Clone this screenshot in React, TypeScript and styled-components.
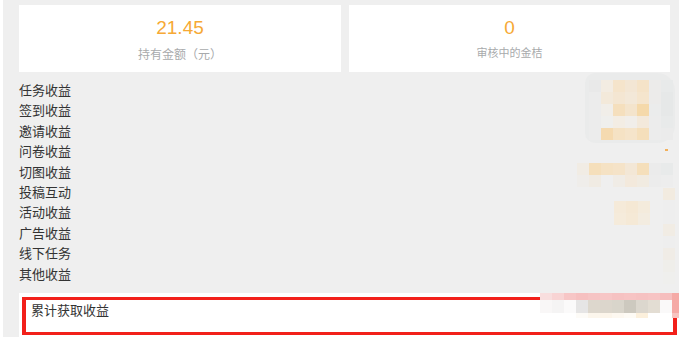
import React from 'react';
import styled, { createGlobalStyle } from 'styled-components';

const GlobalStyle = createGlobalStyle`
    html, body {
        margin: 0;
        padding: 0;
        background: #fff;
    }
    body {
        font-family: "Liberation Sans", "Noto Sans CJK SC", sans-serif;
        color: #333;
    }
`;

interface MosaicProps {
    x: number;
    y: number;
    cols: number;
    cell?: number;
    rows?: string;
}

interface LabelProps {
    size?: number;
    gap?: number;
}

const Page = styled.div`
    position: relative;
    margin-left: 3px;
    width: 676px;
    height: 337px;
    overflow: hidden;
    background: #efefef;
`;

const Summary = styled.div`
    display: grid;
    grid-template-columns: 322px 321px;
    gap: 8px;
    padding: 5px 0 0 16px;
`;

const Card = styled.div`
    display: flex;
    flex-direction: column;
    align-items: center;
    height: 67px;
    padding-top: 12px;
    box-sizing: border-box;
    background: #fff;
`;

const Amount = styled.div`
    font-size: 19px;
    line-height: 22px;
    color: #f6a935;
`;

const CardLabel = styled.div<LabelProps>`
    margin-top: ${({ gap }) => gap ?? 8}px;
    font-size: ${({ size }) => size ?? 12}px;
    line-height: 16px;
    color: #a8aaac;
`;

const IncomeList = styled.ul`
    list-style: none;
    margin: 9px 0 0;
    padding: 0 0 0 16px;
`;

const IncomeItem = styled.li`
    font-size: 13px;
    line-height: 20.4px;
    height: 20.4px;
    color: #333;
`;

const TotalRow = styled.div`
    margin: 8px 0 0 16px;
    padding: 4px 2px 0 3px;
    height: 60px;
    box-sizing: border-box;
    background: #fff;
`;

const Highlight = styled.div`
    height: 38px;
    box-sizing: border-box;
    border: 3px solid #f2201a;
    border-left-width: 4px;
    border-right-width: 4px;
    padding: 1px 0 0 5px;
    font-size: 13px;
    line-height: 20px;
    color: #333;
`;

const Mosaic = styled.div<MosaicProps>`
    position: absolute;
    left: ${({ x }) => x - 3}px;
    top: ${({ y }) => y}px;
    display: grid;
    grid-template-columns: repeat(${({ cols }) => cols}, ${({ cell }) => cell ?? 12}px);
    grid-template-rows: ${({ rows }) => rows ?? 'repeat(auto-fill, 12px)'};
    grid-auto-rows: ${({ cell }) => cell ?? 12}px;
`;

const Cell = styled.span`
    display: block;
`;

const Backdrop = styled.div`
    position: absolute;
    left: 582px;
    top: 73px;
    width: 90px;
    height: 70px;
    border-radius: 10px 18px 18px 10px;
    background: #eaebeb;
`;

const Dot = styled.span`
    position: absolute;
    left: 662px;
    top: 149px;
    width: 3px;
    height: 2px;
    background: #f3b05a;
`;

const items = ['任务收益', '签到收益', '邀请收益', '问卷收益', '切图收益', '投稿互动', '活动收益', '广告收益', '线下任务', '其他收益'];

const mosaics: { x: number; y: number; cols: number; cell?: number; rows?: string; colors: string[] }[] = [
    {
        x: 589,
        y: 80,
        cols: 7,
        colors: [
            'e9e9e9', 'f3ece2', 'f5e4cb', 'f3e6d4', 'f5e3c8', 'ecebea', 'e8eaea',
            'ececec', 'f3e9da', 'f4e6d2', 'f3e8d8', 'f5e5cd', 'ecebea', 'e6e8e8',
            'ececec', 'f1eee9', 'f5dfbd', 'f4e4cc', 'f5d9aa', 'ebecec', 'e6e8e8',
            'ececec', 'efefed', 'f3ede4', 'f1eeea', 'f3e9db', 'ececec', 'e8eaea',
            'ececec', 'f5dab0', 'f5e2c4', 'f5e4ca', 'f5dfbb', 'ececec', 'ebebeb',
        ],
    },
    {
        x: 577,
        y: 163,
        cols: 8,
        colors: [
            'f1ece4', 'f5dfbb', 'f5e2c4', 'f5e3c8', 'f3e7d6', 'f5dfbb', 'ebebeb', 'e8eaea',
            'efedea', 'f0ebe3', 'efefef', 'f0ece6', 'f3e9dc', 'f1ebe1', 'ececec', 'ededed',
        ],
    },
    {
        x: 614,
        y: 201,
        cols: 3,
        colors: ['f5ead9', 'f5e8d4', 'f4ebdc', 'f5ebdb', 'f5e9d6', 'f3ece0'],
    },
    {
        x: 663,
        y: 188,
        cols: 1,
        colors: ['f2ebe0', 'eeeeee', 'eeeeee', 'f1ece4', 'eeeeee', 'f0ece6', 'efeeea', 'efefed', 'efefef'],
    },
    {
        x: 540,
        y: 293,
        cols: 12,
        rows: '7px 13px 5px',
        colors: [
            'f8dede', 'f8d4d4', 'f7c6c6', 'f6c0c0', 'f6c4c4', 'f7c6c6', 'f6c2c2', 'f7c4c4', 'f6c2c2', 'f7c4c4', 'f6bebe', 'f5aaa6',
            'f9f7f7', 'f5f4f4', 'fbfafa', 'e6e5e5', 'ddd7cd', 'dcd6cc', 'd9d5cb', 'cdc9bf', 'dcd7ce', 'e3ddd3', 'faf9f9', 'f5aaa6',
            'ffffff', 'ffffff', 'ffffff', 'fdfbf7', 'fcf6ec', 'fcf5ea', 'fdf8f0', 'fefbf5', 'fcf0dc', 'ffffff', 'ffffff', 'f7c4c0',
        ],
    },
];

const App: React.FC = () => {
    return (
        <>
            <GlobalStyle />
            <Page>
                <Summary>
                    <Card>
                        <Amount>21.45</Amount>
                        <CardLabel>持有金额（元）</CardLabel>
                    </Card>
                    <Card>
                        <Amount>0</Amount>
                        <CardLabel size={11} gap={6}>审核中的金桔</CardLabel>
                    </Card>
                </Summary>
                <IncomeList>
                    {items.map((name) => (
                        <IncomeItem key={name}>{name}</IncomeItem>
                    ))}
                </IncomeList>
                <TotalRow>
                    <Highlight>累计获取收益</Highlight>
                </TotalRow>
                {/* blurred amounts, drawn over the rows */}
                <Backdrop />
                {mosaics.map((m, i) => (
                    <Mosaic key={i} x={m.x} y={m.y} cols={m.cols} cell={m.cell} rows={m.rows}>
                        {m.colors.map((c, j) => (
                            <Cell key={j} style={{ background: `#${c}` }} />
                        ))}
                    </Mosaic>
                ))}
                <Dot />
            </Page>
        </>
    );
};

export default App;
